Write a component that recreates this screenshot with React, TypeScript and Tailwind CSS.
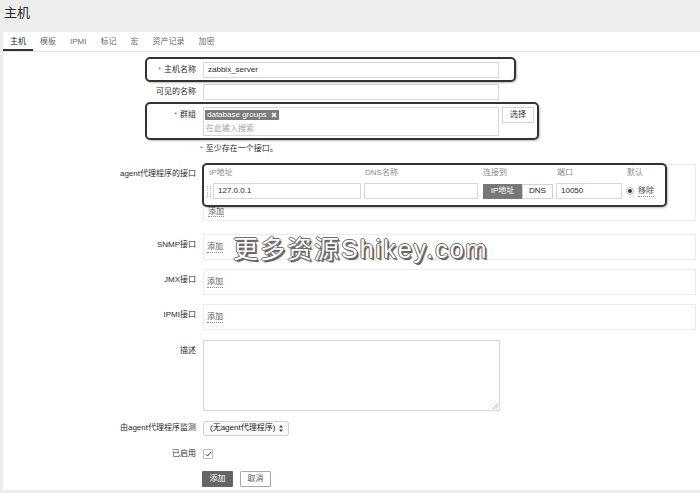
import React from "react";

const Req = () => <span className="mr-[3px] align-top text-[7px] text-[#777]">*</span>;

function Label({ children, className = "" }: { children: React.ReactNode; className?: string }) {
  return (
    <div className={`w-[193px] shrink-0 pr-0 text-right leading-[16px] text-[#2b2b2b] ${className}`}>
      {children}
    </div>
  );
}

function Field({ value = "", className = "" }: { value?: string; className?: string }) {
  return (
    <div
      className={`flex h-[16px] items-center border border-[#d6d6d6] bg-white pl-[4px] text-[#1f1f1f] ${className}`}
    >
      {value}
    </div>
  );
}

function AddLink() {
  return (
    <span className="border-b border-dotted border-[#8a8a8a] leading-[11px] text-[#555]">添加</span>
  );
}

function Grip() {
  return (
    <svg width="5" height="13" viewBox="0 0 5 13" className="ml-[1px]">
      {[0, 1, 2, 3, 4, 5].map((r) =>
        [0, 1].map((c) => (
          <rect key={`${r}-${c}`} x={c * 3} y={r * 2 + 1} width="1" height="1" fill="#b5b5b5" />
        ))
      )}
    </svg>
  );
}

function EmptyInterface({ label, className }: { label: string; className: string }) {
  return (
    <div className={`flex ${className}`}>
      <Label className="pt-[3px]">{label}</Label>
      <div className="ml-[7px] flex h-[26px] w-[493px] items-center border border-[#ececec] pl-[3px]">
        <AddLink />
      </div>
    </div>
  );
}

export default function App() {
  return (
    <div className="relative h-[493px] w-[700px] overflow-hidden bg-[#ededed] font-['Liberation_Sans','Noto_Sans_CJK_SC',sans-serif] text-[8px]">
      <div className="h-[32px] pl-[4px] pt-[5px] text-[13px] leading-[16px] text-[#2a2a2a]">主机</div>

      <div className="ml-[3px] h-[458px] bg-white">
        <div className="flex h-[20px] border-b border-[#e4e4e4]">
          {["主机", "模板", "IPMI", "标记", "宏", "资产记录", "加密"].map((t, i) => (
            <div
              key={t}
              className={`flex items-center px-[7px] ${
                i === 0 ? "border-b-2 border-[#333] pt-[2px] text-[#222]" : "text-[#6a6a6a]"
              }`}
            >
              {t}
            </div>
          ))}
        </div>

        <div className="flex flex-col pt-[10px]">
          <div className="flex">
            <Label>
              <Req />主机名称
            </Label>
            <Field value="zabbix_server" className="ml-[7px] w-[296px]" />
          </div>

          <div className="mt-[6px] flex">
            <Label>可见的名称</Label>
            <Field className="ml-[7px] w-[296px]" />
          </div>

          <div className="mt-[7px] flex">
            <Label>
              <Req />群组
            </Label>
            <div className="ml-[7px] h-[29px] w-[296px] border border-[#d6d6d6] bg-white px-[1px] pt-[2px]">
              <div className="flex h-[10px] w-[74px] items-center gap-[4px] bg-[#7c7c7c] pl-[2px] text-white">
                database groups
                <svg width="6" height="6" viewBox="0 0 6 6">
                  <path d="M1 1L5 5M5 1L1 5" stroke="#fff" strokeWidth="1.6" />
                </svg>
              </div>
              <div className="mt-[3px] pl-[1px] leading-[11px] text-[#a3a3a3]">在此输入搜索</div>
            </div>
            <div className="ml-[3px] flex h-[16px] w-[32px] items-center justify-center border border-[#d2d2d2] bg-white text-[#333]">
              选择
            </div>
          </div>

          <div className="mt-[7px] flex">
            <div className="w-[193px]" />
            <div className="ml-[4px] leading-[12px] text-[#2b2b2b]">
              <span className="mr-[3px] align-top text-[7px] text-[#777]">*</span>至少存在一个接口。
            </div>
          </div>

          <div className="mt-[9px] flex">
            <Label className="pt-[2px]">agent代理程序的接口</Label>
            <div className="ml-[7px] h-[57px] w-[493px] border border-[#ececec] pl-[2px] pt-[2px]">
              <div className="flex leading-[12px] text-[#8a8a8a]">
                <div className="w-[158px] pl-[3px]">IP地址</div>
                <div className="w-[119px] pl-[1px]">DNS名称</div>
                <div className="w-[73px]">连接到</div>
                <div className="w-[70px] pl-[1px]">端口</div>
                <div className="pl-[1px]">默认</div>
              </div>
              <div className="mt-[4px] flex items-center">
                <div className="w-[7px]">
                  <Grip />
                </div>
                <Field value="127.0.0.1" className="h-[15px] w-[148px]" />
                <Field className="ml-[3px] h-[15px] w-[114px]" />
                <div className="ml-[5px] flex h-[15px]">
                  <div className="flex w-[39px] items-center justify-center bg-[#777] text-white">IP地址</div>
                  <div className="flex w-[31px] items-center justify-center border border-[#d2d2d2] text-[#222]">
                    DNS
                  </div>
                </div>
                <Field value="10050" className="ml-[3px] h-[15px] w-[66px]" />
                <div className="ml-[4px] flex h-[8px] w-[8px] items-center justify-center rounded-full border border-[#b5b5b5]">
                  <div className="h-[4px] w-[4px] rounded-full bg-[#333]" />
                </div>
                <span className="ml-[4px] border-b border-dotted border-[#8a8a8a] leading-[11px] text-[#555]">
                  移除
                </span>
              </div>
              <div className="mt-[7px] pl-[2px] leading-[11px]">
                <AddLink />
              </div>
            </div>
          </div>

          <EmptyInterface label="SNMP接口" className="mt-[13px]" />
          <EmptyInterface label="JMX接口" className="mt-[9px]" />
          <EmptyInterface label="IPMI接口" className="mt-[9px]" />

          <div className="mt-[10px] flex">
            <Label className="pt-[3px]">描述</Label>
            <div className="relative ml-[7px] h-[71px] w-[297px] border border-[#d6d6d6] bg-white">
              <svg width="6" height="6" viewBox="0 0 6 6" className="absolute bottom-[1px] right-[1px]">
                <path d="M1 6L6 1M3.5 6L6 3.5" stroke="#999" strokeWidth="0.7" />
              </svg>
            </div>
          </div>

          <div className="mt-[9px] flex items-center">
            <Label>由agent代理程序监测</Label>
            <div className="ml-[7px] flex h-[15px] w-[86px] items-center justify-between rounded-[3px] border border-[#cfcfcf] bg-[#fafafa] pl-[6px] pr-[5px] text-[#222]">
              (无agent代理程序)
              <svg width="4" height="7" viewBox="0 0 4 7">
                <path d="M2 0L4 2.6H0Z M2 7L4 4.4H0Z" fill="#444" />
              </svg>
            </div>
          </div>

          <div className="mt-[10px] flex items-center">
            <Label className="leading-[10px]">已启用</Label>
            <div className="ml-[7px] flex h-[10px] w-[10px] items-center justify-center rounded-[1px] border border-[#bdbdbd] bg-white">
              <svg width="7" height="6" viewBox="0 0 7 6">
                <path d="M0.8 3.2L2.6 5L6.2 0.8" fill="none" stroke="#333" strokeWidth="1" />
              </svg>
            </div>
          </div>

          <div className="mt-[9px] flex">
            <div className="w-[193px]" />
            <div className="ml-[6px] flex h-[16px] w-[31px] items-center justify-center rounded-[1px] bg-[#656565] text-white">
              添加
            </div>
            <div className="ml-[7px] flex h-[16px] w-[31px] items-center justify-center rounded-[1px] border border-[#a9a9a9] bg-white text-[#555]">
              取消
            </div>
          </div>
        </div>
      </div>

      {/* annotation outlines */}
      <div className="absolute left-[145px] top-[57px] h-[25px] w-[371px] rounded-[5px] border-2 border-[#333] shadow-[1px_1px_2px_rgba(0,0,0,0.25)]" />
      <div className="absolute left-[145px] top-[102px] h-[38px] w-[394px] rounded-[5px] border-2 border-[#333] shadow-[1px_1px_2px_rgba(0,0,0,0.25)]" />
      <div className="absolute left-[202px] top-[163px] h-[44px] w-[465px] rounded-[5px] border-2 border-[#333] shadow-[1px_1px_2px_rgba(0,0,0,0.25)]" />

      {/* watermark */}
      <div className="absolute left-[233px] top-[234px] text-[25px] leading-[30px] tracking-[2px] text-white [text-shadow:1px_0_0_#6a6a6a,-1px_0_0_#6a6a6a,0_1px_0_#6a6a6a,0_-1px_0_#6a6a6a,2px_2px_1px_#555]">
        更多资源Shikey.com
      </div>
    </div>
  );
}
